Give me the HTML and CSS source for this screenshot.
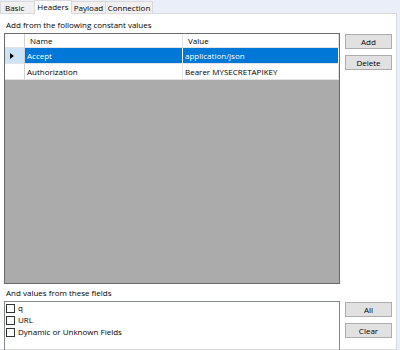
FILE: index.html
```html
<!DOCTYPE html>
<html lang="en">
<head>
    <meta charset="UTF-8">
    <title>Headers</title>
    <link rel="stylesheet" href="styles.css">
</head>
<body>
    <div class="janela">
        <ul class="abas">
            <li class="aba aba-basic">Basic</li>
            <li class="aba ativa">Headers</li>
            <li class="aba aba-payload">Payload</li>
            <li class="aba aba-conexao">Connection</li>
        </ul>

        <div class="painel">
            <p class="rotulo">Add from the following constant values</p>

            <div class="linha">
                <div class="grade">
                    <div class="cab canto"></div>
                    <div class="cab">Name</div>
                    <div class="cab">Value</div>

                    <div class="seletor marcado"><span class="seta"></span></div>
                    <div class="celula sel">Accept</div>
                    <div class="celula sel">application/json</div>

                    <div class="seletor"></div>
                    <div class="celula">Authorization</div>
                    <div class="celula">Bearer MYSECRETAPIKEY</div>

                    <div class="vazio"></div>
                </div>

                <div class="botoes">
                    <button type="button">Add</button>
                    <button type="button">Delete</button>
                </div>
            </div>

            <p class="rotulo rotulo2">And values from these fields</p>

            <div class="linha">
                <div class="lista">
                    <label class="item"><span class="caixa"></span>q</label>
                    <label class="item"><span class="caixa"></span>URL</label>
                    <label class="item"><span class="caixa"></span>Dynamic or Unknown Fields</label>
                </div>

                <div class="botoes">
                    <button type="button">All</button>
                    <button type="button">Clear</button>
                </div>
            </div>
        </div>
    </div>
</body>
</html>
```

FILE: styles.css
```css
*{
    margin: 0;
    padding: 0;
    box-sizing: border-box;
    font-family: "Open Sans", "Liberation Sans", sans-serif;
    font-size: 8px;
    color: #000;
}

body{
    background-color: #eaeef8;
}

.janela{
    width: 400px;
    height: 350px;
    overflow: hidden;
}

.abas{
    display: flex;
    list-style: none;
    height: 13px;
    align-items: flex-end;
}

.aba{
    height: 12px;
    line-height: 11px;
    text-align: center;
    background-color: #f0f0f0;
    border: 1px solid #dadada;
    border-bottom: none;
    margin-right: -1px;
}

.aba-basic{
    width: 35px;
    text-align: left;
    padding-left: 4px;
}

.aba-payload{
    width: 35px;
}

.aba-conexao{
    width: 48px;
}

.aba.ativa{
    width: 38px;
    height: 14px;
    margin-bottom: -1px;
    background-color: #fff;
    position: relative;
    z-index: 1;
}

.painel{
    width: 397px;
    height: 337px;
    background-color: #fff;
    border: 1px solid #dadada;
    border-left: none;
    padding: 5px 0 0 4px;
}

.rotulo{
    padding-left: 2px;
    height: 14px;
    line-height: 12px;
}

.rotulo2{
    margin-top: 3px;
}

.linha{
    display: flex;
    gap: 5px;
}

.grade{
    width: 336px;
    height: 251px;
    border: 1px solid #6a6a6a;
    background-color: #ababab;
    display: grid;
    grid-template-columns: 20px 158px 1fr;
    grid-template-rows: 14px 16px 16px 1fr;
}

.cab{
    background-color: #fff;
    border-right: 1px solid #e3e3e3;
    border-bottom: 1px solid #e3e3e3;
    padding-left: 5px;
    line-height: 13px;
}

.cab.canto{
    border-right: 1px solid #d0d0d0;
}

.seletor{
    background-color: #fff;
    border-right: 1px solid #d0d0d0;
    border-bottom: 1px solid #e3e3e3;
    display: flex;
    align-items: center;
    padding-left: 5px;
}

.seletor.marcado{
    background-color: #cce4f7;
}

.seta{
    width: 0;
    height: 0;
    border-top: 3px solid transparent;
    border-bottom: 3px solid transparent;
    border-left: 4px solid #000;
}

.celula{
    background-color: #fff;
    border-right: 1px solid #e3e3e3;
    border-bottom: 1px solid #e3e3e3;
    padding-left: 2px;
    line-height: 15px;
    white-space: nowrap;
    overflow: hidden;
}

.celula.sel{
    background-color: #0078d7;
    color: #fff;
    border-right-color: #fff;
}

.vazio{
    grid-column: 1 / 4;
}

.botoes{
    display: flex;
    flex-direction: column;
    gap: 6px;
    width: 47px;
    padding-top: 1px;
}

button{
    height: 15px;
    background-color: #e1e1e1;
    border: 1px solid #adadad;
    font-size: 8px;
    line-height: 12px;
}

.lista{
    width: 336px;
    height: 60px;
    border: 1px solid #828790;
    border-bottom: none;
    padding: 0 1px;
    display: flex;
    flex-direction: column;
}

.item{
    display: flex;
    align-items: center;
    gap: 3px;
    height: 12px;
    line-height: 10px;
}

.caixa{
    width: 9px;
    height: 9px;
    border: 1px solid #333;
    background-color: #fff;
}
```
